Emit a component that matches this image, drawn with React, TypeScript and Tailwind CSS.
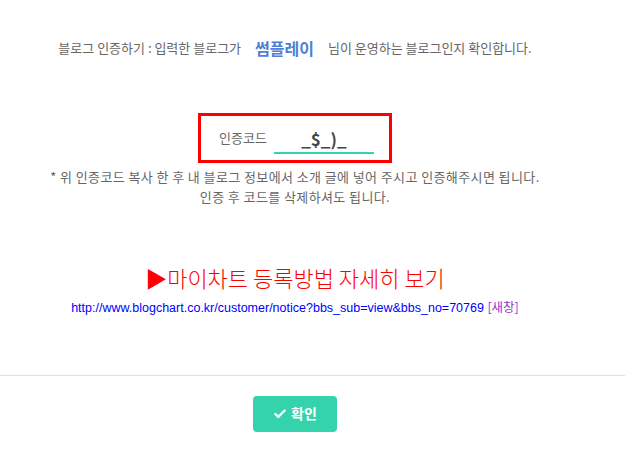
import { Check } from "lucide-react";

export default function App() {
  return (
    <div className="w-[625px] h-[449px] bg-white text-[#666] text-[13px] font-['Noto_Sans_CJK_KR',sans-serif] flex flex-col">
      <div className="w-[590px] flex flex-col items-center">
        <p className="mt-[36px] h-[24px] flex items-center">
          블로그 인증하기 : 입력한 블로그가
          <span className="mx-[14px] text-[16px] font-bold text-[#4f7fd6]">썸플레이</span>
          님이 운영하는 블로그인지 확인합니다.
        </p>

        <div className="mt-[53px] w-[194px] h-[50px] border-[3px] border-[#ff0000] flex items-center pl-[18px]">
          <span className="text-[13px] text-[#666]">인증코드</span>
          <div className="ml-[7px] w-[100px] h-[28px] border-b-[2px] border-[#34d3ac] flex items-center justify-center text-[17px] font-bold text-[#444] mt-[4px]">
            _$_)_
          </div>
        </div>

        <p className="mt-[4px] leading-[20px] text-center tracking-[0.4px]">
          * 위 인증코드 복사 한 후 내 블로그 정보에서 소개 글에 넣어 주시고 인증해주시면 됩니다.
          <br />
          인증 후 코드를 삭제하셔도 됩니다.
        </p>

        <p className="mt-[55px] text-[22px] text-[#ff0000] leading-[30px] font-light">▶마이차트 등록방법 자세히 보기</p>
        <p className="mt-[6px] text-[12.5px] text-[#0000ff] font-['Liberation_Sans',sans-serif]">
          http://www.blogchart.co.kr/customer/notice?bbs_sub=view&amp;bbs_no=70769{" "}
          <span className="text-[#9933cc] font-['Noto_Sans_CJK_KR',sans-serif]">[새창]</span>
        </p>
      </div>

      <div className="mt-[57px] border-t border-[#e2dfea]" />

      <div className="w-[590px] flex justify-center mt-[20px]">
        <button className="w-[84px] h-[36px] rounded-[4px] bg-[#34d3ac] text-white text-[14px] font-bold flex items-center justify-center gap-[4px]">
          <Check size={14} strokeWidth={4} />
          확인
        </button>
      </div>
    </div>
  );
}
